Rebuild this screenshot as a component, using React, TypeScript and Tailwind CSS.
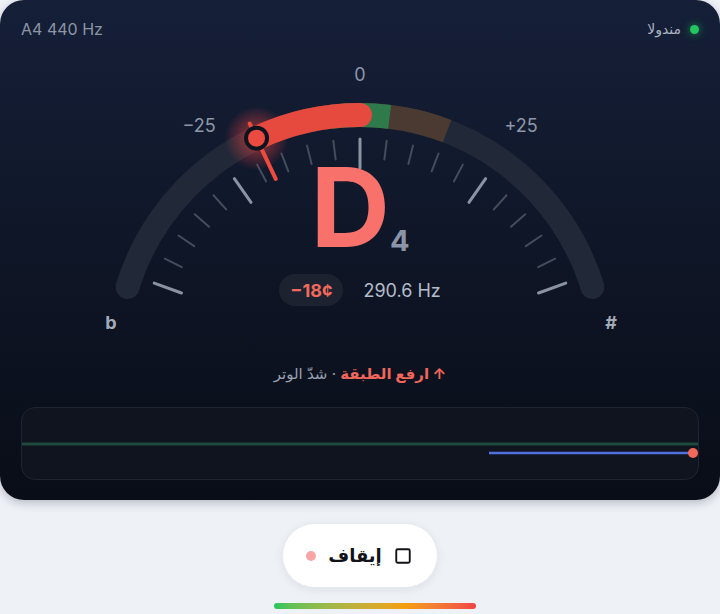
import React from "react";
import { Square } from "lucide-react";

// gauge geometry, in page pixels (svg viewBox starts at y=48)
const CX = 360;
const CY = 358;
const R = 243;
const DEG_PER_CENT = 1.4;

function polar(deg: number, r: number) {
  const a = (deg * Math.PI) / 180;
  return [CX + r * Math.sin(a), CY - r * Math.cos(a)];
}

function arcPath(from: number, to: number, r = R) {
  const [x1, y1] = polar(from, r);
  const [x2, y2] = polar(to, r);
  const large = Math.abs(to - from) > 180 ? 1 : 0;
  return `M ${x1} ${y1} A ${r} ${r} 0 ${large} 1 ${x2} ${y2}`;
}

function Gauge({ cents }: { cents: number }) {
  const needle = cents * DEG_PER_CENT;
  const [hx, hy] = polar(needle, R);
  const [n1x, n1y] = polar(needle, 198);
  const [n2x, n2y] = polar(needle, 259);

  const ticks = [];
  for (let c = -50; c <= 50; c += 5) {
    const major = c % 25 === 0;
    const [x1, y1] = polar(c * DEG_PER_CENT, major ? 190 : 200);
    const [x2, y2] = polar(c * DEG_PER_CENT, 219);
    ticks.push(
      <line
        key={c}
        x1={x1}
        y1={y1}
        x2={x2}
        y2={y2}
        stroke={major ? "#8b93a3" : "#454c5c"}
        strokeWidth={major ? 3 : 2}
        strokeLinecap="round"
      />,
    );
  }

  return (
    <div className="relative h-[292px]">
      <svg width={720} height={292} viewBox="0 48 720 292" className="block">
        <defs>
          <radialGradient id="needle-glow">
            <stop offset="0%" stopColor="#ef4444" stopOpacity={0.7} />
            <stop offset="100%" stopColor="#ef4444" stopOpacity={0} />
          </radialGradient>
        </defs>

        <path d={arcPath(-73, 73)} stroke="#212838" strokeWidth={24} fill="none" strokeLinecap="round" />
        <path d={arcPath(-21, 21)} stroke="#4a3a31" strokeWidth={24} fill="none" />
        <path d={arcPath(-7, 7)} stroke="#2f7a4b" strokeWidth={24} fill="none" />

        {ticks}

        <circle cx={hx} cy={hy} r={32} fill="url(#needle-glow)" />
        <path d={arcPath(needle, 0)} stroke="#e6493e" strokeWidth={24} fill="none" strokeLinecap="round" />

        <line x1={n1x} y1={n1y} x2={n2x} y2={n2y} stroke="#ee4b3f" strokeWidth={4} strokeLinecap="round" />
        <circle cx={hx} cy={hy} r={10.5} fill="#ea4a3f" stroke="#0e1320" strokeWidth={4} />

        <g fill="#8e97a8" fontSize={18} fontFamily="Inter, 'DejaVu Sans', sans-serif" textAnchor="middle">
          <text x={360} y={81}>0</text>
          <text x={199} y={132}>−25</text>
          <text x={521} y={132}>+25</text>
        </g>
        <g fill="#a3abb9" fontSize={18} fontWeight={700} fontFamily="Inter, 'DejaVu Sans', sans-serif" textAnchor="middle">
          <text x={111} y={329}>b</text>
          <text x={611} y={329}>#</text>
        </g>
      </svg>

      <div className="absolute inset-x-0 top-[104px] flex flex-col items-center">
        <div className="whitespace-nowrap leading-none">
          <span className="text-[110px] font-bold leading-none text-[#f8716a]">D</span>
          <span className="align-[-4px] text-[29px] font-bold leading-none text-[#8b94a6]">4</span>
        </div>
        <div className="mt-[12px] flex items-center gap-[20px]">
          <span className="flex h-[32px] items-center rounded-full bg-[#1c2230] px-[11px] text-[18px] font-bold text-[#f16a5c]">
            −18¢
          </span>
          <span className="text-[18px] text-[#b4bccb]">290.6 Hz</span>
        </div>
      </div>
    </div>
  );
}

export default function App() {
  return (
    <div className="min-h-screen bg-[#eef2f7] font-['Inter','DejaVu_Sans',sans-serif]">
      <div className="flex h-[500px] flex-col rounded-[24px] bg-gradient-to-b from-[#151f38] to-[#090d17] shadow-[0_3px_10px_rgba(15,23,42,0.25)]">
        <header className="flex items-center justify-between px-[21px] pt-[19px] pb-[9px]">
          <span className="text-[16px] leading-5 text-[#8d96a7]">A4 440 Hz</span>
          <span className="flex items-center gap-[9px] text-[14px] leading-5 text-[#aab2c0]">
            <span dir="rtl">مندولا</span>
            <span className="h-[9px] w-[9px] rounded-full bg-[#22c55e] shadow-[0_0_8px_rgba(34,197,94,0.7)]" />
          </span>
        </header>

        <Gauge cents={-18} />

        <p dir="rtl" className="mt-[22px] text-center text-[15px] leading-6 text-[#9aa2b1]">
          <span className="font-bold text-[#f0665a]">↑ ارفع الطبقة</span>
          <span> · </span>
          <span>شدّ الوتر</span>
        </p>

        <div className="mx-[21px] mt-[21px] h-[73px] overflow-hidden rounded-[14px] border border-[#1e2431] bg-[#10141f]">
          <svg width={676} height={71} viewBox="0 0 676 71" className="block">
            <line x1={0} y1={36} x2={676} y2={36} stroke="#1f4a3b" strokeWidth={3} />
            <line x1={467} y1={45} x2={671} y2={45} stroke="#5070e0" strokeWidth={2.5} />
            <circle cx={671} cy={45} r={5} fill="#f2695b" />
          </svg>
        </div>
      </div>

      <div className="flex justify-center pt-[23px]">
        <button
          dir="rtl"
          className="flex h-[65px] w-[156px] items-center justify-center gap-[12px] rounded-full border border-[#e6e9ef] bg-white pr-[2px] text-[18px] font-bold text-[#111318] shadow-[0_2px_8px_rgba(15,23,42,0.08)]"
        >
          <Square size={18} strokeWidth={2.5} />
          <span>إيقاف</span>
          <span className="h-[10px] w-[10px] rounded-full bg-[#f8a5a5]" />
        </button>
      </div>

      <div className="ml-[274px] mt-[15px] h-[6px] w-[202px] rounded-full bg-gradient-to-r from-[#22c55e] via-[#f59e0b] via-65% to-[#ef4444]" />
    </div>
  );
}
